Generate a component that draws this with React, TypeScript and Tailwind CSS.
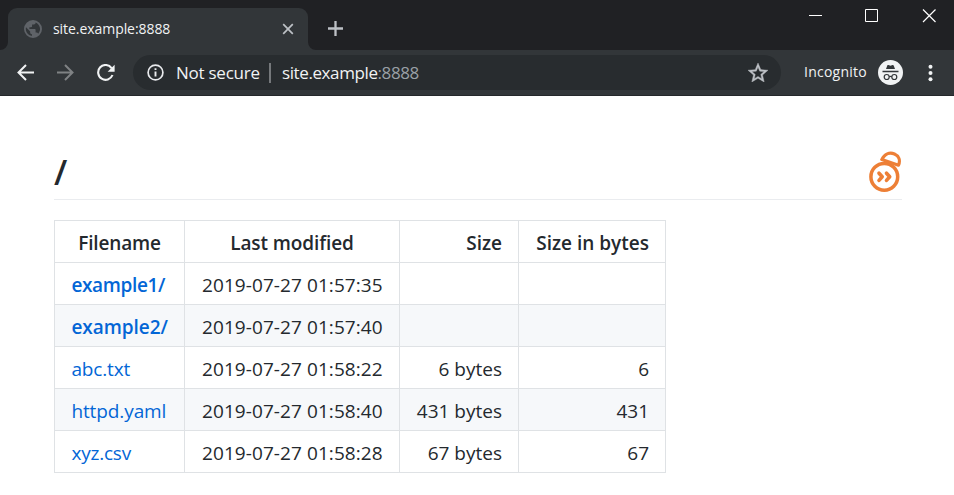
import React from "react";

const headers = [
  { label: "Filename", cls: "text-center tracking-[-0.15px]" },
  { label: "Last modified", cls: "text-center tracking-[-0.1px]" },
  { label: "Size", cls: "text-right" },
  { label: "Size in bytes", cls: "text-right" },
];

const rows = [
  { name: "example1/", link: "font-[570] tracking-[-0.35px]", date: "2019-07-27 01:57:35", size: "", bytes: "" },
  { name: "example2/", link: "font-[570] tracking-[-0.05px]", date: "2019-07-27 01:57:40", size: "", bytes: "" },
  { name: "abc.txt", link: "tracking-[-0.15px]", date: "2019-07-27 01:58:22", size: "6 bytes", bytes: "6" },
  { name: "httpd.yaml", link: "tracking-[-0.1px]", date: "2019-07-27 01:58:40", size: "431 bytes", bytes: "431" },
  { name: "xyz.csv", link: "tracking-[-0.2px]", date: "2019-07-27 01:58:28", size: "67 bytes", bytes: "67" },
];

function TabStrip() {
  return (
    <div className="flex h-[50px] items-end bg-[#202124]">
      <svg width="8" height="8" viewBox="0 0 8 8">
        <path d="M8 0v8H0a8 8 0 0 0 8-8z" fill="#323639" />
      </svg>
      <div className="flex h-[42px] w-[300px] items-center rounded-t-[9px] bg-[#323639] pl-[15px] pr-[13px]">
        <svg width="20" height="20" viewBox="0 0 24 24" fill="#5f6368">
          <path d="M12 1.2a10.8 10.8 0 1 0 0 21.6 10.8 10.8 0 0 0 0-21.6zM10.7 20.5A8.6 8.6 0 0 1 3.6 10l5 5v1.2c0 1.2 1 2.1 2.1 2.1v2.2zm7.5-2.7a2.1 2.1 0 0 0-2-1.5h-1.1v-3.2c0-.6-.5-1.1-1.1-1.1H7.7V9.8h2.1c.6 0 1.1-.5 1.1-1.1V6.6H13c1.2 0 2.1-1 2.1-2.1v-.4a8.6 8.6 0 0 1 3.1 13.7z" />
        </svg>
        <span className="ml-[10px] text-[14px] leading-5 tracking-[-0.06px] text-[#f1f3f4]">site.example:8888</span>
        <svg className="ml-auto" width="14" height="14" viewBox="0 0 14 14" stroke="#bdc1c6" strokeWidth="1.7">
          <path d="M2.2 2.2l9.6 9.6M11.8 2.2l-9.6 9.6" />
        </svg>
      </div>
      <svg width="8" height="8" viewBox="0 0 8 8">
        <path d="M0 0v8h8a8 8 0 0 1-8-8z" fill="#323639" />
      </svg>
      <svg className="mb-[13px] ml-[11px]" width="17" height="17" viewBox="0 0 17 17" stroke="#bdc1c6" strokeWidth="2.3">
        <path d="M1 8.5h15M8.5 1v15" />
      </svg>
      <div className="ml-auto flex h-full items-start pr-[18px] pt-[9px]">
        <svg width="14" height="14" viewBox="0 0 14 14" stroke="#fff">
          <path d="M1 6.5h13" />
        </svg>
        <svg className="ml-[43px]" width="14" height="14" viewBox="0 0 14 14" stroke="#fff" fill="none">
          <path d="M.5 .5h12v12h-12z" />
        </svg>
        <svg className="ml-[43px]" width="14" height="14" viewBox="0 0 14 14" stroke="#fff" strokeWidth="1.2">
          <path d="M1 .5l12.500 12.500M13.500 .5L1 13" />
        </svg>
      </div>
    </div>
  );
}

function Toolbar() {
  return (
    <div className="flex h-[46px] items-center border-b border-[#25282b] bg-[#323639]">
      <svg className="ml-[17px]" width="17" height="18" viewBox="0 0 17 18" stroke="#f1f3f4" strokeWidth="2" fill="none">
        <path d="M17 8.5H2M9 1L1.5 8.5L9 16" />
      </svg>
      <svg className="ml-[23px]" width="17" height="18" viewBox="0 0 17 18" stroke="#7f8284" strokeWidth="2" fill="none">
        <path d="M0 8.5h15M8 1L15.5 8.5L8 16" />
      </svg>
      <svg className="ml-[22px]" width="19" height="18" viewBox="0 0 19 18">
        <path d="M15.6 4.1A7.400 7.400 0 1 0 16.5 11" stroke="#f1f3f4" strokeWidth="2.1" fill="none" />
        <path d="M18.6 .8v7h-7z" fill="#f1f3f4" />
      </svg>
      <div className="ml-[18px] flex h-[35px] w-[648px] items-center rounded-full bg-[#282c2f] pl-[14px] pr-[13px] text-[17px] text-[#f1f3f4]">
        <svg width="17" height="17" viewBox="0 0 17 17" fill="none" stroke="#e8eaed" strokeWidth="1.7">
          <circle cx="8.5" cy="8.5" r="7.4" />
          <path d="M8.5 7.6v5M8.5 4.3v1.8" strokeWidth="1.9" />
        </svg>
        <span className="ml-[12px] w-[93px] whitespace-nowrap tracking-[-0.25px]">Not secure</span>
        <span className="h-5 w-[2px] bg-[#75787b]" />
        <span className="ml-[11px] whitespace-nowrap tracking-[-0.4px]">
          site.example<span className="text-[#9aa0a6]">:8888</span>
        </span>
        <svg className="ml-auto" width="20" height="19" viewBox="2 2 20 19" fill="#bdc1c6" stroke="#bdc1c6" strokeWidth="0.4">
          <path d="M22 9.240l-7.190-.62L12 2 9.190 8.630 2 9.240l5.460 4.730L5.820 21 12 17.270 18.180 21l-1.630-7.030L22 9.240zM12 15.400l-3.760 2.270 1-4.280-3.320-2.880 4.380-.38L12 6.100l1.710 4.040 4.380.38-3.320 2.880 1 4.280L12 15.400z" />
        </svg>
      </div>
      <span className="ml-[23px] w-[74px] pb-[2px] text-[14px] tracking-[0.25px] text-[#f1f3f4]">Incognito</span>
      <svg width="25" height="25" viewBox="0 0 25 25">
        <circle cx="12.5" cy="12.5" r="12.5" fill="#f1f3f4" />
        <path d="M8 9L9.3 5.4C9.5 4.9 10 4.8 10.5 5l2 .7 2-.7c.5-.2 1 0 1.2.4L17 9zM4.5 10.7h16v1.5h-16z" fill="#323639" />
        <g fill="none" stroke="#323639" strokeWidth="1.2">
          <circle cx="8.7" cy="17" r="2.5" />
          <circle cx="16.3" cy="17" r="2.5" />
          <path d="M11.2 16.7q1.3-.8 2.6 0" />
        </g>
      </svg>
      <svg className="ml-[25px]" width="5" height="18" viewBox="0 0 5 18" fill="#f1f3f4">
        <circle cx="2.5" cy="2.700" r="2" />
        <circle cx="2.5" cy="9" r="2" />
        <circle cx="2.5" cy="15.300" r="2" />
      </svg>
    </div>
  );
}

function Logo() {
  return (
    <svg width="34" height="41" viewBox="0 0 34 41" fill="none" stroke="#ed7f36" strokeWidth="3.5">
      <circle cx="16.3" cy="25.8" r="13.400" />
      <path d="M13.8 8.6C16.5 3 21.500 1 26.500 3c4.500 2 6 6.500 4 11.200z" strokeWidth="3.200" strokeLinejoin="round" />
      <path d="M11 22.200l3.200 3.600-3.200 3.600M18.500 22.200l3.200 3.600-3.200 3.600" strokeWidth="3.600" strokeLinecap="round" strokeLinejoin="round" />
    </svg>
  );
}

export default function App() {
  return (
    <div className="h-[495px] w-[954px] overflow-hidden bg-white font-['Open_Sans','Noto_Sans',sans-serif]">
      <TabStrip />
      <Toolbar />
      <main className="px-[54px] pt-[55px] text-[#24292e]">
        <header className="flex h-[49px] w-[848px] items-start justify-between border-b border-[#eaecef]">
          <h1 className="text-[34px] font-semibold leading-[43px]">/</h1>
          <Logo />
        </header>
        <table className="mt-5 w-[612px] table-fixed border-collapse whitespace-nowrap text-[19px] leading-[30px]">
          <colgroup>
            <col className="w-[130px]" />
            <col className="w-[215px]" />
            <col className="w-[119px]" />
            <col className="w-[147px]" />
          </colgroup>
          <thead>
            <tr className="h-[42px]">
              {headers.map((h) => (
                <th key={h.label} className={"border border-[#dfe2e5] px-4 pb-0 pt-[2px] font-[570] " + h.cls}>
                  {h.label}
                </th>
              ))}
            </tr>
          </thead>
          <tbody>
            {rows.map((r) => (
              <tr key={r.name} className="h-[42px] even:bg-[#f6f8fa]">
                <td className="border border-[#dfe2e5] pb-0 pl-[16.4px] pr-0 pt-[2px]">
                  <a className={"text-[#0366d6] " + r.link}>{r.name}</a>
                </td>
                <td className="border border-[#dfe2e5] pb-0 pl-[17px] pr-0 pt-[2px] tracking-[0.08px]">{r.date}</td>
                <td className="border border-[#dfe2e5] px-4 pb-0 pt-[2px] text-right">{r.size}</td>
                <td className="border border-[#dfe2e5] px-4 pb-0 pt-[2px] text-right">{r.bytes}</td>
              </tr>
            ))}
          </tbody>
        </table>
      </main>
    </div>
  );
}
